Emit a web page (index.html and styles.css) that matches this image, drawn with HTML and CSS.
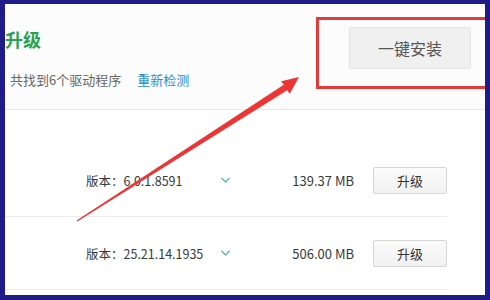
FILE: index.html
```html
<!DOCTYPE html>
<html lang="zh-CN">
<head>
<meta charset="utf-8">
<link rel="stylesheet" href="styles.css">
</head>
<body>
<div class="panel">
  <div class="header">
    <div class="head-left">
      <div class="title">升级</div>
      <div class="sub"><span class="count">共找到6个驱动程序</span><a class="recheck">重新检测</a></div>
    </div>
    <button class="install">一键安装</button>
  </div>
  <div class="list">
    <div class="row">
      <div class="ver">版本：6.0.1.8591</div>
      <svg class="chev" width="9" height="6" viewBox="0 0 9 6"><polyline points="0.5,0.8 4.5,4.8 8.5,0.8" fill="none" stroke="#41b97b" stroke-width="1.2"/></svg>
      <div class="size">139.37 MB</div>
      <button class="upg">升级</button>
    </div>
    <div class="row">
      <div class="ver">版本：25.21.14.1935</div>
      <svg class="chev" width="9" height="6" viewBox="0 0 9 6"><polyline points="0.5,0.8 4.5,4.8 8.5,0.8" fill="none" stroke="#41b97b" stroke-width="1.2"/></svg>
      <div class="size">506.00 MB</div>
      <button class="upg">升级</button>
    </div>
  </div>
  <div class="highlight"></div>
  <svg class="arrow" width="490" height="300" viewBox="0 0 490 300">
    <polygon points="76.6,220.6 283.8,84.8 281.2,81.2 299,77 289.8,93.8 287.2,90.2 77.4,221.6" fill="#ec3535"/>
  </svg>
</div>
</body>
</html>
```

FILE: styles.css
```css
html, body {
  margin: 0;
  padding: 0;
}
body {
  width: 490px;
  height: 300px;
  background: #1f1b89;
  box-sizing: border-box;
  padding: 4px 5px 5px 5px;
  font-family: "Noto Sans CJK SC", "Noto Sans", sans-serif;
}
.panel {
  position: relative;
  height: 291px;
  background: #ffffff;
  overflow: hidden;
}
.header {
  height: 106px;
  box-sizing: border-box;
  border-bottom: 1px solid #e8e8e8;
  background: #fcfcfd;
  display: flex;
  justify-content: space-between;
  align-items: flex-start;
}
.head-left {
  padding-top: 23px;
}
.title {
  font-size: 18px;
  line-height: 24px;
  font-weight: bold;
  color: #26a250;
}
.sub {
  margin-top: 19px;
  padding-left: 5px;
  font-size: 13px;
  line-height: 20px;
  display: flex;
  gap: 16px;
}
.count {
  color: #666666;
}
.recheck {
  color: #2b8bd6;
}
.install {
  margin-top: 23px;
  margin-right: 14px;
  width: 122px;
  height: 42px;
  background: #f0f0f0;
  border: 1px solid #e3e3e3;
  border-radius: 2px;
  font-family: inherit;
  font-size: 16px;
  color: #555555;
  padding: 0;
}
.list {
  padding-top: 34px;
}
.row {
  height: 73px;
  box-sizing: border-box;
  display: flex;
  align-items: center;
  padding-left: 81px;
  margin-right: 38px;
  border-bottom: 1px solid #ececec;
  font-size: 13px;
  color: #383838;
}
.ver {
  width: 135px;
  font-size: 12.5px;
}
.chev {
  flex: none;
  margin-top: 0;
}
.size {
  width: 124px;
  text-align: right;
}
.upg {
  margin-left: 19px;
  width: 74px;
  height: 27px;
  padding: 0;
  background: linear-gradient(#fbfbfb, #f1f1f1);
  border: 1px solid #d6d6d6;
  border-radius: 2px;
  font-family: inherit;
  font-size: 13px;
  color: #333333;
}
.highlight {
  position: absolute;
  left: 311px;
  top: 13px;
  width: 180px;
  height: 72px;
  box-sizing: border-box;
  border: 3px solid #e53a3a;
}
.arrow {
  position: absolute;
  left: -5px;
  top: -4px;
}
```
